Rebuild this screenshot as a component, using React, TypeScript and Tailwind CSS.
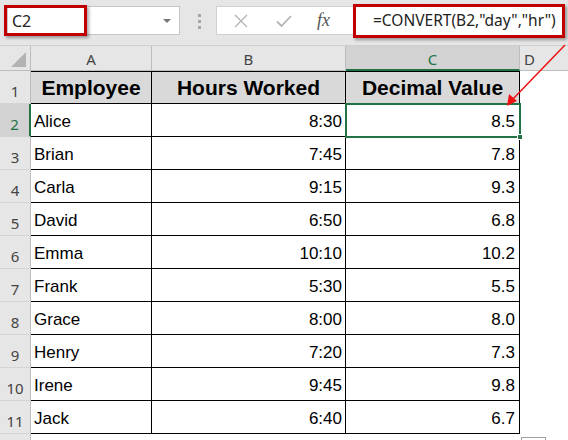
import React from "react";

const data: [string, string, string][] = [
  ["Alice", "8:30", "8.5"],
  ["Brian", "7:45", "7.8"],
  ["Carla", "9:15", "9.3"],
  ["David", "6:50", "6.8"],
  ["Emma", "10:10", "10.2"],
  ["Frank", "5:30", "5.5"],
  ["Grace", "8:00", "8.0"],
  ["Henry", "7:20", "7.3"],
  ["Irene", "9:45", "9.8"],
  ["Jack", "6:40", "6.7"],
];

const ui = { fontFamily: '"Noto Sans", "Open Sans", sans-serif' };
const cellFont = { fontFamily: '"Liberation Sans", Arial, sans-serif' };

function RowHeader({ n, selected }: { n: number; selected?: boolean }) {
  return (
    <div
      style={ui}
      className={
        "w-[31px] shrink-0 flex items-end justify-center pb-[3px] text-[15px] leading-[18px] border-b border-[#d4d4d4] " +
        (selected
          ? "bg-[#d2d2d2] text-[#217346] border-r-2 border-r-[#217346]"
          : "bg-[#e6e6e6] text-[#444] border-r border-r-[#bdbdbd]")
      }
    >
      {n}
    </div>
  );
}

export default function App() {
  return (
    <div className="relative w-[568px] h-[440px] overflow-hidden bg-white">
      {/* formula bar */}
      <div className="flex h-[46px] bg-[#e6e6e6] border-b border-[#d0d0d0]">
        <div className="ml-[7px] mt-[6px] w-[173px] h-[29px] bg-white border border-[#c6c6c6] flex items-center justify-between pl-[4px] pr-[8px]">
          <span style={ui} className="text-[16px] text-[#222]">C2</span>
          <span className="w-0 h-0 border-l-[4px] border-r-[4px] border-t-[4px] border-l-transparent border-r-transparent border-t-[#777]" />
        </div>
        <div className="ml-[18px] mt-[14px] flex flex-col gap-[3px]">
          <span className="w-[3px] h-[3px] bg-[#a6a6a6]" />
          <span className="w-[3px] h-[3px] bg-[#a6a6a6]" />
          <span className="w-[3px] h-[3px] bg-[#a6a6a6]" />
        </div>
        <div className="ml-[15px] mt-[6px] w-[140px] h-[29px] bg-white border border-[#d0d0d0] flex items-center">
          <svg width="14" height="14" viewBox="0 0 14 14" className="ml-[17px]">
            <path d="M1 1 L13 13 M13 1 L1 13" stroke="#b4b4b4" strokeWidth="1.4" fill="none" />
          </svg>
          <svg width="16" height="14" viewBox="0 0 16 14" className="ml-[28px]">
            <path d="M1 7.5 L5.5 12 L15 2" stroke="#b4b4b4" strokeWidth="1.8" fill="none" />
          </svg>
          <span
            className="ml-[25px] text-[18px] italic text-[#555]"
            style={{ fontFamily: '"Liberation Serif", "Times New Roman", serif' }}
          >
            fx
          </span>
        </div>
      </div>
      {/* formula input overlays the button group */}
      <div className="absolute left-[353px] top-[4px] w-[212px] h-[34px] bg-white border-[3px] border-[#c00000] shadow-[2px_2px_3px_rgba(0,0,0,0.35)] flex items-center pl-[17px]">
        <span style={ui} className="text-[15.5px] text-[#222] whitespace-nowrap">
          =CONVERT(B2,"day","hr")
        </span>
      </div>
      {/* name box annotation */}
      <div className="absolute left-[4px] top-[5px] w-[83px] h-[31px] border-[3px] border-[#c00000] shadow-[2px_2px_3px_rgba(0,0,0,0.35)]" />

      {/* column headers */}
      <div className="flex h-[25px]" style={ui}>
        <div className="w-[31px] shrink-0 bg-[#e6e6e6] border-r border-b border-[#bdbdbd] relative">
          <svg className="absolute right-[4px] bottom-[3px]" width="15" height="15" viewBox="0 0 15 15">
            <path d="M15 0 L15 15 L0 15 Z" fill="#b3b3b3" />
          </svg>
        </div>
        <div className="w-[121px] shrink-0 bg-[#e6e6e6] border-r border-b border-[#bdbdbd] flex items-end justify-center pb-[2px] text-[15px] leading-[18px] text-[#444]">A</div>
        <div className="w-[194px] shrink-0 bg-[#e6e6e6] border-r border-b border-[#bdbdbd] flex items-end justify-center pb-[2px] text-[15px] leading-[18px] text-[#444]">B</div>
        <div className="w-[174px] shrink-0 bg-[#d2d2d2] border-r border-r-[#bdbdbd] border-b-2 border-b-[#217346] flex items-end justify-center pb-[1px] text-[15px] leading-[18px] text-[#217346]">C</div>
        <div className="flex-1 bg-[#e6e6e6] border-b border-[#bdbdbd] flex items-end pl-[4px] pb-[2px] text-[15px] leading-[18px] text-[#444]">D</div>
      </div>

      {/* row 1 */}
      <div className="flex h-[33px]">
        <RowHeader n={1} />
        <div style={cellFont} className="w-[121px] shrink-0 bg-[#d9d9d9] border-y border-r border-black flex items-end justify-center pb-[3px] text-[21px] leading-[24px] font-bold text-black">Employee</div>
        <div style={cellFont} className="w-[194px] shrink-0 bg-[#d9d9d9] border-y border-r border-black flex items-end justify-center pb-[3px] text-[21px] leading-[24px] font-bold text-black">Hours Worked</div>
        <div style={cellFont} className="w-[174px] shrink-0 bg-[#d9d9d9] border-y border-r border-black flex items-end justify-center pb-[3px] text-[21px] leading-[24px] font-bold text-black">Decimal Value</div>
        <div className="flex-1" />
      </div>

      {data.map(([name, hrs, dec], i) => (
        <div key={name} className="flex h-[33px]">
          <RowHeader n={i + 2} selected={i === 0} />
          <div style={cellFont} className="w-[121px] shrink-0 border-b border-r border-black flex items-end pl-[3px] pb-[4px] text-[17px] leading-[20px] text-black">{name}</div>
          <div style={cellFont} className="w-[194px] shrink-0 border-b border-r border-black flex items-end justify-end pr-[3px] pb-[4px] text-[17px] leading-[20px] text-black">{hrs}</div>
          <div style={cellFont} className="w-[174px] shrink-0 border-b border-r border-black flex items-end justify-end pr-[4px] pb-[4px] text-[17px] leading-[20px] text-black">{dec}</div>
          <div className="flex-1" />
        </div>
      ))}

      {/* partial row 12 */}
      <div className="flex h-[10px]">
        <div className="w-[31px] shrink-0 bg-[#e6e6e6] border-r border-[#bdbdbd]" />
      </div>

      {/* selection C2 */}
      <div className="absolute left-[345px] top-[103px] w-[176px] h-[35px] border-2 border-[#217346]" />
      <div className="absolute left-[517px] top-[134px] w-[6px] h-[6px] bg-[#217346] border border-white" />

      {/* quick analysis box */}
      <div className="absolute left-[521px] top-[437px] w-[25px] h-[10px] border border-[#a0a0a0] bg-white" />

      {/* arrow */}
      <svg className="absolute inset-0 pointer-events-none" width="568" height="440" viewBox="0 0 568 440">
        <line x1="565" y1="45" x2="512" y2="100" stroke="#ee1111" strokeWidth="1.5" />
        <path d="M507 106 L509 94 L517 101 Z" fill="#ee1111" />
      </svg>
    </div>
  );
}
